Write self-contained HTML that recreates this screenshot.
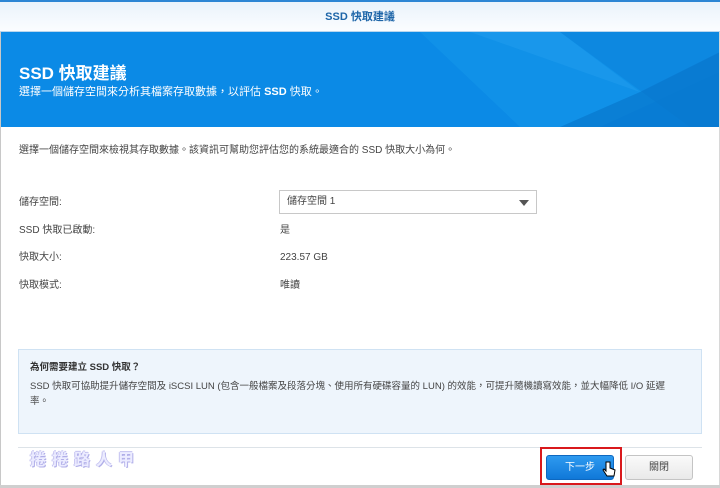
<!DOCTYPE html>
<html><head><meta charset="utf-8">
<style>
*{margin:0;padding:0;box-sizing:border-box}
body{width:720px;height:488px;background:#fff;font-family:"Liberation Sans","Noto Sans CJK TC",sans-serif;position:relative;overflow:hidden;color:#333;font-size:10px}
.abs{position:absolute}
.hdr{left:0;top:0;width:720px;height:32px;background:linear-gradient(#eaf3fb,#fbfdff);border-top:2px solid #2d86d4;border-bottom:1px solid #b9d6ee;text-align:center;line-height:30px;font-size:11px;color:#1d65a8;font-weight:bold}
.ban{left:0;top:32px;width:720px;height:95px;background:#0b8ae6;overflow:hidden}
.lbl{left:19px;font-size:10px;color:#444;line-height:12px}
.val{left:280px;font-size:10px;color:#444;line-height:12px}
</style></head><body>
<div class="abs hdr">SSD 快取建議</div>
<div class="abs ban">
<svg width="720" height="95" style="position:absolute;left:0;top:0">
<polygon points="420,0 720,0 720,40 600,95 520,95" fill="#1496ea" opacity=".6"/>
<polygon points="560,0 720,0 720,95 690,95" fill="#0a7fd8" opacity=".5"/>
<polygon points="640,60 720,20 720,95 560,95" fill="#0673c8" opacity=".6"/>
<polygon points="470,0 560,0 640,60" fill="#2aa3f0" opacity=".35"/>
</svg>
<div class="abs" style="left:19px;top:32px;color:#fff;font-size:17px;font-weight:bold;line-height:20px">SSD 快取建議</div>
<div class="abs" style="left:19px;top:53px;color:#fff;font-size:11px;line-height:14px">選擇一個儲存空間來分析其檔案存取數據，以評估 <b>SSD</b> 快取。</div>
</div>
<div class="abs" style="left:19px;top:145px;font-size:10px;color:#444;line-height:12px">選擇一個儲存空間來檢視其存取數據。該資訊可幫助您評估您的系統最適合的 SSD 快取大小為何。</div>
<div class="abs lbl" style="top:197px">儲存空間:</div>
<div class="abs" style="left:279px;top:190px;width:258px;height:24px;border:1px solid #c8c8c8;background:#fff;padding-left:7px;line-height:22px;color:#444">儲存空間 1
<svg class="abs" style="right:7px;top:9px" width="10" height="6"><polygon points="0,0 10,0 5,6" fill="#555"/></svg></div>
<div class="abs lbl" style="top:225px">SSD 快取已啟動:</div><div class="abs val" style="top:225px">是</div>
<div class="abs lbl" style="top:252px">快取大小:</div><div class="abs val" style="top:252px">223.57 GB</div>
<div class="abs lbl" style="top:280px">快取模式:</div><div class="abs val" style="top:280px">唯讀</div>
<div class="abs" style="left:18px;top:349px;width:684px;height:85px;background:#eef5fc;border:1px solid #cfe2f3"></div>
<div class="abs" style="left:30px;top:362px;font-weight:bold;font-size:9.5px;color:#333;line-height:12px">為何需要建立 SSD 快取？</div>
<div class="abs" style="left:30px;top:379px;width:650px;font-size:9.5px;line-height:15px;color:#444">SSD 快取可協助提升儲存空間及 iSCSI LUN (包含一般檔案及段落分塊、使用所有硬碟容量的 LUN) 的效能，可提升隨機讀寫效能，並大幅降低 I/O 延遲率。</div>
<div class="abs" style="left:18px;top:447px;width:684px;height:1px;background:#dde3e8"></div>
<div class="abs" style="left:30px;top:451px;font-size:16px;font-weight:bold;color:#ececff;letter-spacing:6px;line-height:20px;text-shadow:1px 1px 0 #b0aee8,-1px 0 0 #c4c2f0,0 -1px 0 #c4c2f0">捲捲路人甲</div>
<div class="abs" style="left:540px;top:447px;width:82px;height:38px;border:2px solid #d9191c"></div>
<div class="abs" style="left:546px;top:455px;width:68px;height:25px;background:linear-gradient(#2e9af0,#1078d8);border:1px solid #0e68c0;border-radius:3px;color:#fff;text-align:center;line-height:23px;font-size:10px">下一步</div>
<svg class="abs" style="left:602px;top:461px" width="14" height="18"><path d="M4 1v9l-2-2-1 1 4 6h7l1-6-5-2V1z" fill="#fff" stroke="#000" stroke-width="1"/></svg>
<div class="abs" style="left:625px;top:455px;width:68px;height:25px;background:linear-gradient(#fafafa,#e9e9e9);border:1px solid #c4c4c4;border-radius:3px;color:#444;text-align:center;line-height:23px;font-size:10px">關閉</div>
<div class="abs" style="left:0;top:32px;width:1px;height:453px;background:#c8c8c8"></div>
<div class="abs" style="left:719px;top:32px;width:1px;height:453px;background:#d8d8d8"></div>
<div class="abs" style="left:0;top:485px;width:720px;height:3px;background:#cfcfcf"></div>
</body></html>
